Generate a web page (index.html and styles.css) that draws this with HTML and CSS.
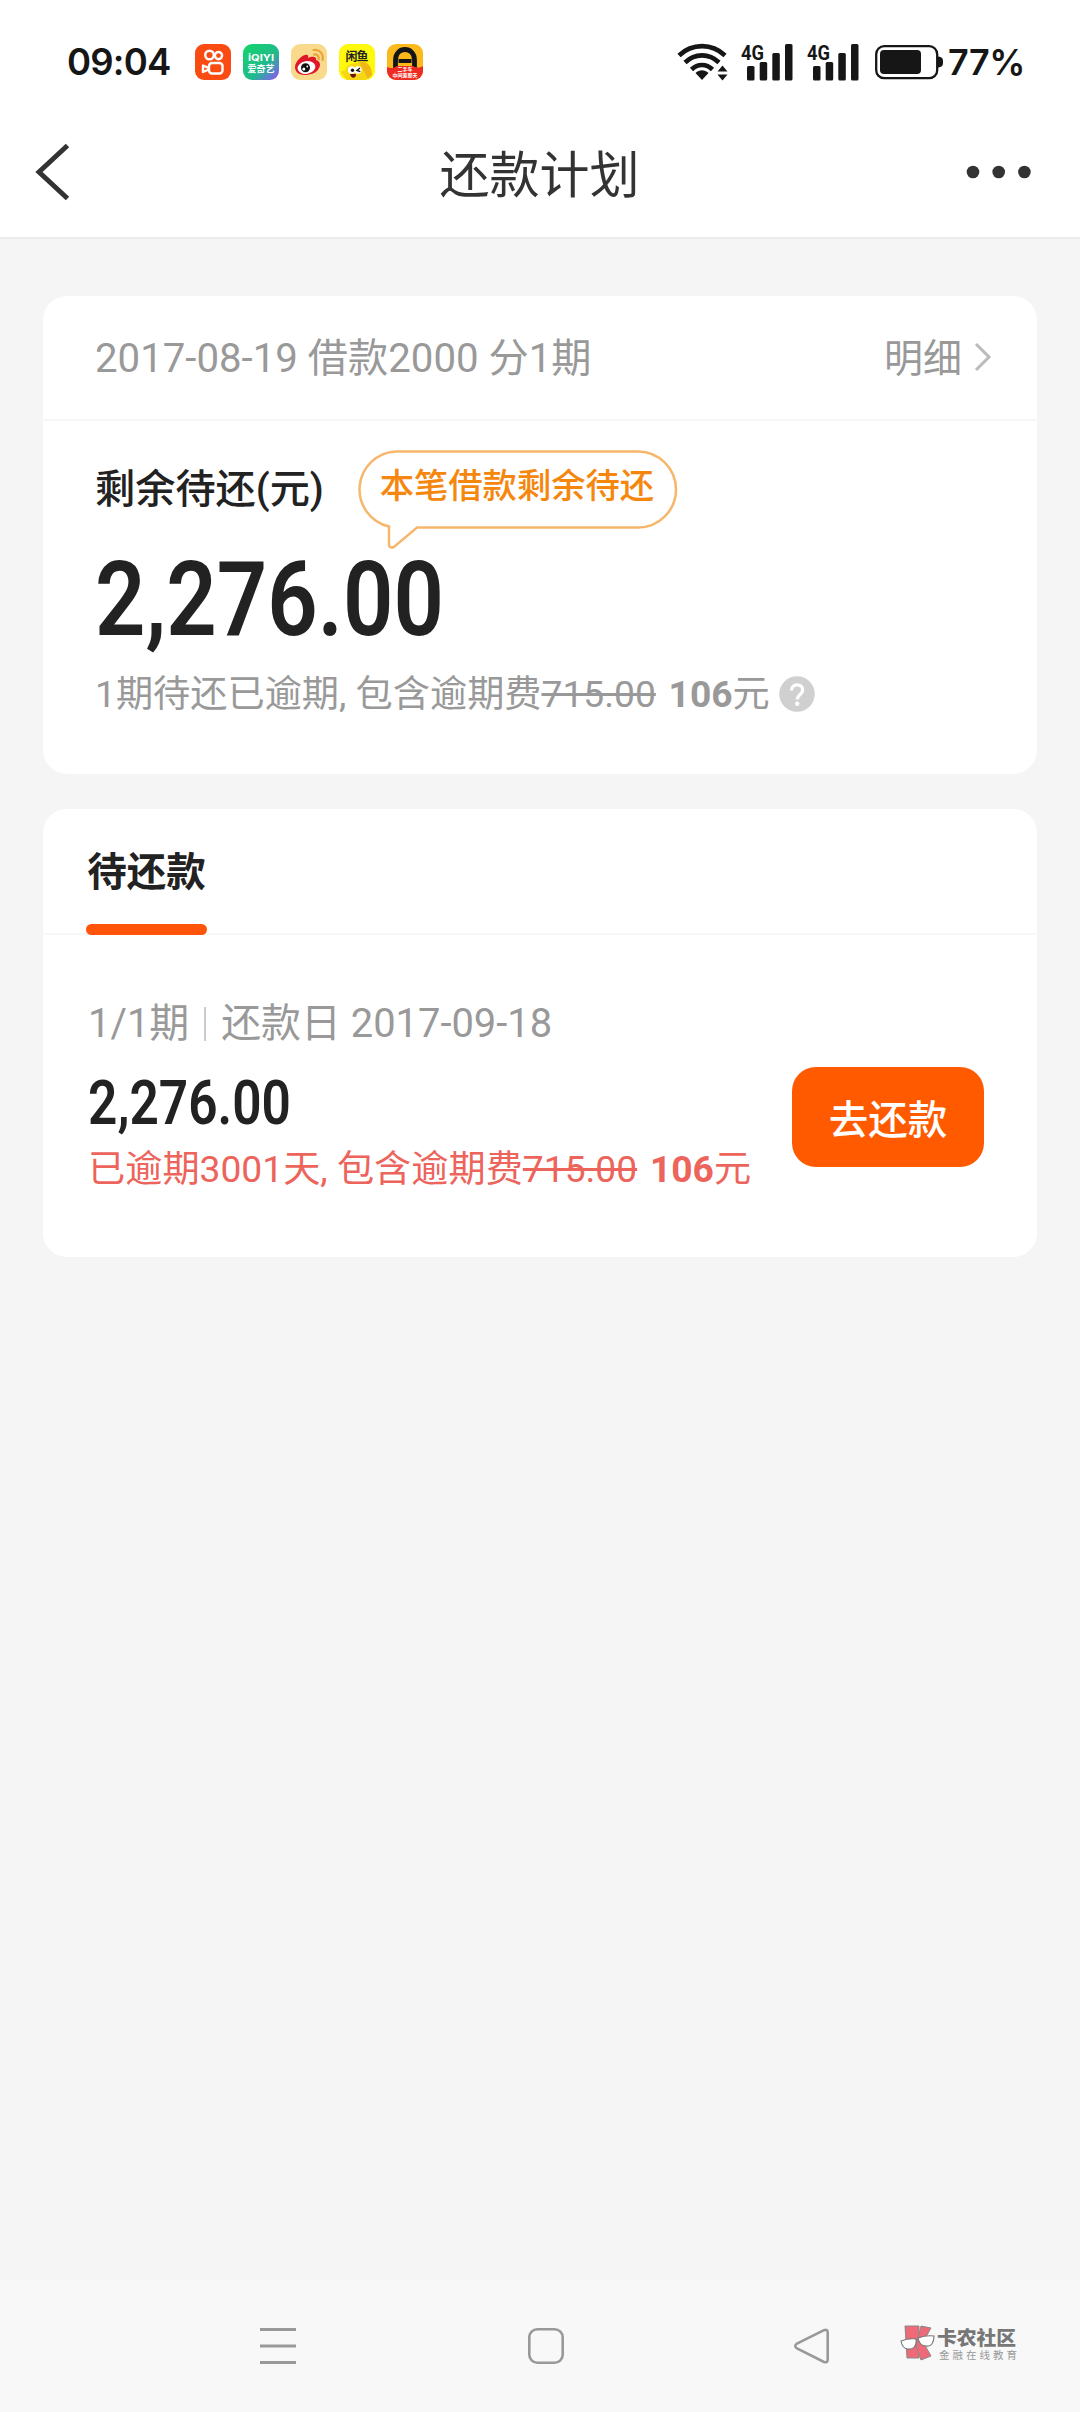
FILE: index.html
```html
<!DOCTYPE html>
<html lang="zh-CN">
<head>
<meta charset="utf-8">
<title>还款计划</title>
<link rel="stylesheet" href="styles.css">
</head>
<body>
<div class="status">
  <span class="time">09:04</span>
  <div class="apps">
    <svg class="app" viewBox="0 0 36 36"><rect width="36" height="36" rx="9" fill="#fa4b12"/><g fill="none" stroke="#fff" stroke-width="2.4"><circle cx="14.5" cy="11" r="4.3"/><circle cx="23.5" cy="11.6" r="3.6"/><rect x="14" y="19" width="13.5" height="10.5" rx="3"/><path d="M14 24.2 8 21.5v6.500l6-2.500" stroke-linejoin="round"/></g></svg>
    <svg class="app" viewBox="0 0 36 36"><defs><linearGradient id="qy" x1="0" y1="0" x2="1" y2="1"><stop offset="0" stop-color="#13d668"/><stop offset=".6" stop-color="#20ba8c"/><stop offset=".82" stop-color="#5e7fd0"/><stop offset="1" stop-color="#a044e8"/></linearGradient></defs><rect width="36" height="36" rx="9" fill="url(#qy)"/><text class="app-latin" x="18" y="16.500" textLength="26" lengthAdjust="spacingAndGlyphs">iQIYI</text><text class="app-cjk" x="18" y="28" textLength="27">爱奇艺</text></svg>
    <svg class="app" viewBox="0 0 36 36"><rect width="36" height="36" rx="9" fill="#f9d98c"/><path d="M4 23c0-5 6-11 10-12 3-1 4 1 3 3 4-2 9-2 8 2 4 1 5 5 3 8-2 5-9 7-14 7-6 0-10-3-10-8z" fill="#e0162b"/><ellipse cx="15.500" cy="23.500" rx="9" ry="6.300" fill="#fff" transform="rotate(-10 15.500 23.500)"/><circle cx="14.500" cy="23.800" r="4.500" fill="#111"/><circle cx="12.800" cy="25" r="1.500" fill="#fff"/><circle cx="16.300" cy="22.500" r=".9" fill="#fff"/><path d="M22.500 6c6-1 10.500 4 9 10M23 10.500c3-.5 5.300 1.800 4.600 4.700" fill="none" stroke="#e9a43a" stroke-width="2.200" stroke-linecap="round"/></svg>
    <svg class="app" viewBox="0 0 36 36"><rect width="36" height="36" rx="9" fill="#fdf80c"/><text class="app-fish" x="18" y="16.500" textLength="23">闲鱼</text><path d="M3 30c-2-3 1-4 3-3 1-6 7-8 13-8 2-3 5-2 7 0 5 2 7 6 6 11l-2 4-4 2H8z" fill="#f7d713"/><path d="M20 18c6-2 13 3 13 13l-4 4z" fill="#f0b716"/><circle cx="12.500" cy="26" r="3.700" fill="#fff"/><circle cx="19" cy="26" r="3.700" fill="#fff"/><circle cx="13.500" cy="26.300" r="1.700" fill="#111"/><path d="m21 24-3 2.400 3.300 1.200" fill="none" stroke="#111" stroke-width="1.400"/><path d="M11 30h6c0 5-5 5-6 0z" fill="#6d130b"/></svg>
    <svg class="app" viewBox="0 0 36 36"><defs><clipPath id="ac"><rect width="36" height="36" rx="9"/></clipPath></defs><g clip-path="url(#ac)"><path fill="#fcb91c" d="M0 0h36v36H0z"/><path d="M8.500 24v-8c0-14 19-14 19 0v8" fill="none" stroke="#151515" stroke-width="4.800"/><path d="M11.500 17h13" stroke="#151515" stroke-width="3.800"/><path d="M0 23c4 2 7 1 10-1h16c4 2 7 2 10 0v14H0z" fill="#ec2b22"/></g><text class="app-tag" x="18" y="27" textLength="15">二手车</text><text class="app-tag" x="18" y="33" textLength="25">中间差那天</text></svg>
  </div>
  <svg class="wifi" viewBox="0 0 52 38"><g fill="none" stroke="#161616" stroke-width="4.600"><path d="M2 12.500c13-12.500 33-12.500 46 0"/><path d="M8 19.500c10-9.500 24-9.500 34 0"/><path d="M14.500 26.500c6-6 15-6 21 0"/></g><path d="M25 37l-6.500-7c4-3.600 9-3.600 13 0zM40.500 28.500l5-6 5 6zM40.500 31.500h10l-5 6z" fill="#161616"/></svg>
  <svg class="signal" viewBox="0 0 54 38"><text class="net" x="0" y="16.500" textLength="23" lengthAdjust="spacingAndGlyphs">4G</text><g fill="#161616"><rect x="6" y="23" width="7.500" height="14.500" rx="1.500"/><rect x="18.700" y="19" width="7.500" height="18.500" rx="1.500"/><rect x="31.300" y="10" width="7.500" height="27.500" rx="1.500"/><rect x="44" y="1" width="7.500" height="36.500" rx="1.500"/></g></svg>
  <svg class="signal" viewBox="0 0 54 38"><text class="net" x="0" y="16.500" textLength="23" lengthAdjust="spacingAndGlyphs">4G</text><g fill="#161616"><rect x="6" y="23" width="7.500" height="14.500" rx="1.500"/><rect x="18.700" y="19" width="7.500" height="18.500" rx="1.500"/><rect x="31.300" y="10" width="7.500" height="27.500" rx="1.500"/><rect x="44" y="1" width="7.500" height="36.500" rx="1.500"/></g></svg>
  <svg class="battery" viewBox="0 0 68 36"><rect x="1.200" y="2.200" width="61" height="32" rx="8" fill="none" stroke="#161616" stroke-width="2.300"/><rect x="5" y="6" width="41" height="24" rx="4" fill="#161616"/><path d="M63 12.500c5 .5 5 3 5 5.500s0 5-5 5.500z" fill="#161616"/></svg>
  <span class="percent">77%</span>
</div>
<header class="titlebar">
  <svg class="back" viewBox="0 0 36 60"><path d="M32.500 3.500 4 30l28.500 26.500" fill="none" stroke="#333" stroke-width="5"/></svg>
  <h1 class="title">还款计划</h1>
  <svg class="more" viewBox="0 0 66 14"><g fill="#333"><circle cx="7" cy="7" r="6.300"/><circle cx="32.700" cy="7" r="6.300"/><circle cx="58.400" cy="7" r="6.300"/></g></svg>
</header>
<main class="content">
  <section class="card summary">
    <div class="loan">
      <span>2017-08-19 借款2000 分1期</span>
      <a class="detail">明细<svg class="arrow" viewBox="0 0 18 30"><path d="M2 2l13 13L2 28" fill="none" stroke="#bbb" stroke-width="3"/></svg></a>
    </div>
    <div class="remain">
      <div class="remain-head">
        <span class="remain-label">剩余待还(元)</span>
        <div class="bubble">
          <svg class="bubble-shape" viewBox="0 0 320 100"><path d="M39 1.500h242a38 38 0 0 1 0 76H60L37 97q-5 2-5-3V76.500A38 38 0 0 1 39 1.500z" fill="#fff" stroke="#f6b76c" stroke-width="2.500"/></svg>
          <span class="bubble-text">本笔借款剩余待还</span>
        </div>
      </div>
      <div class="total"><span class="num">2,276.00</span></div>
      <div class="note"><span class="fee">1期待还已逾期, 包含逾期费<s>715.00</s> <b>106</b>元</span><svg class="help" viewBox="0 0 36 36"><circle cx="18" cy="18" r="17.800" fill="#d0d0d0"/><path d="M12.500 14.500c0-7.500 11.200-7.500 11.200-.5 0 4.500-5.500 4.500-5.500 9.500" fill="none" stroke="#fff" stroke-width="3.200"/><circle cx="18.200" cy="27.700" r="2.200" fill="#fff"/></svg></div>
    </div>
  </section>
  <section class="card plan">
    <div class="tabs"><span class="tab">待还款</span></div>
    <div class="item">
      <div class="item-info">
        <div class="period"><span>1/1期</span><i class="bar"></i><span>还款日 2017-09-18</span></div>
        <div class="amount"><span class="num">2,276.00</span></div>
        <div class="overdue fee">已逾期3001天, 包含逾期费<s>715.00</s> <b>106</b>元</div>
      </div>
      <button class="pay">去还款</button>
    </div>
  </section>
</main>
<nav class="navbar">
  <svg class="nav-icon" viewBox="0 0 36 36"><path d="M0 1.500h36M0 18h36M0 34.500h36" stroke="#999" stroke-width="3"/></svg>
  <svg class="nav-icon" viewBox="0 0 36 36"><rect x="1.300" y="1.300" width="33.400" height="33.400" rx="8" fill="none" stroke="#999" stroke-width="2.600"/></svg>
  <svg class="nav-icon" viewBox="0 0 36 36"><path d="M30 2.200 3 15.500q-3.500 2.500 0 5L30 34q3.700 1 3.700-2.500v-27Q33.700 1 30 2.200z" fill="none" stroke="#999" stroke-width="2.600"/></svg>
  <div class="brand">
    <svg class="brand-logo" viewBox="0 0 36 38"><g fill="#ef6a78" stroke="#888" stroke-width="1"><path d="M5 2h14v32H7z"/><path d="M21 2l10 2-8 14 8 14-10 4-5-14z"/></g><g fill="#fff" stroke="#777" stroke-width="1.100"><path d="M1 17q8-3 15-2c1 7-3 11-8 10-4 0-6-3-7-8z"/><path d="M18 14q8-3 16-2c0 7-3 11-8 10-4 0-7-3-8-8z"/></g></svg>
    <div class="brand-words"><span class="brand-name">卡农社区</span><span class="brand-sub">金融在线教育</span></div>
  </div>
</nav>
</body>
</html>
```
FILE: styles.css
```css
* { box-sizing: border-box; }
body {
  margin: 0;
  width: 1080px;
  height: 2412px;
  display: flex;
  flex-direction: column;
  background: #f5f5f5;
  color: #222;
  font-family: Roboto, "Noto Sans CJK SC", sans-serif;
  overflow: hidden;
}
svg { display: block; flex: none; overflow: visible; }
span, h1, div { white-space: nowrap; }

.status {
  height: 124px;
  padding-left: 67px;
  display: flex;
  align-items: center;
  background: #fff;
  color: #161616;
  font-family: Inter, sans-serif;
}
.time { width: 128px; font-size: 36.5px; font-weight: 600; letter-spacing: -0.8px; }
.apps { display: flex; gap: 12px; width: 482px; }
.app { width: 36px; height: 36px; }
.app text { text-anchor: middle; fill: #fff; font-family: "Noto Sans CJK SC", sans-serif; font-weight: 700; }
.app .app-latin { font-family: Inter, sans-serif; font-size: 9.5px; }
.app .app-cjk { font-size: 9px; }
.app .app-fish { font-size: 12px; fill: #222; }
.app .app-tag { font-size: 5px; }
.wifi { width: 52px; height: 38px; margin-right: 12px; }
.signal { width: 54px; height: 38px; margin-right: 12px; }
.net { font: 700 21px Roboto, sans-serif; fill: #161616; }
.battery { width: 68px; height: 36px; margin-left: 2px; }
.percent { margin-left: 5px; font-size: 36px; font-weight: 600; letter-spacing: -0.5px; }

.titlebar {
  height: 115px;
  padding: 0 48px 18px 35px;
  display: flex;
  align-items: center;
  justify-content: space-between;
  background: #fff;
  border-bottom: 2px solid #ececec;
}
.back { width: 36px; height: 60px; margin-right: 42px; }
.title { margin: 0; padding-top: 8px; font-size: 50px; line-height: 60px; font-weight: 400; color: #333; }
.more { width: 66px; height: 14px; }

.content { flex: 1; padding: 57px 43px 0; display: flex; flex-direction: column; gap: 35px; }
.card { background: #fff; border-radius: 24px; }

.summary { height: 478px; }
.loan {
  height: 125px;
  padding: 0 45px 6px 52px;
  display: flex;
  align-items: center;
  justify-content: space-between;
  border-bottom: 2px solid #f6f6f6;
  font-size: 40.2px;
  color: #999;
}
.detail { display: flex; align-items: center; gap: 12px; font-size: 39px; }
.arrow { width: 18px; height: 30px; margin-top: 5px; }
.remain { padding: 29px 52px 0; }
.remain-head { display: flex; height: 78px; gap: 33px; }
.remain-label { font-size: 40.2px; line-height: 80px; font-weight: 500; }
.bubble { position: relative; width: 320px; height: 78px; text-align: center; }
.bubble-shape { position: absolute; left: 0; top: 0; width: 320px; height: 100px; }
.bubble-text { position: relative; font-size: 34.3px; line-height: 72px; font-weight: 500; color: #f5870f; }
.num { display: inline-block; transform: scaleX(.85); transform-origin: left; font-weight: 600; }
.total { height: 120px; font-size: 104px; line-height: 143px; }
.note { display: flex; align-items: flex-start; height: 92px; padding-top: 21px; font-size: 37.2px; line-height: 50px; color: #999; }
.fee b { margin-left: 3.5px; }
.help { width: 36px; height: 36px; margin: 7px 0 0 9px; }

.plan { height: 448px; }
.tabs { height: 126px; padding-left: 43px; border-bottom: 2px solid #f8f8f8; }
.tab {
  position: relative;
  display: block;
  width: 121px;
  height: 126px;
  text-align: center;
  font-size: 39.5px;
  line-height: 128px;
  font-weight: 700;
}
.tab::after {
  content: "";
  position: absolute;
  left: 0;
  bottom: 0;
  width: 121px;
  height: 11px;
  border-radius: 6px;
  background: #ff5409;
}
.item { display: flex; justify-content: space-between; padding: 60px 53px 0 45px; }
.period { display: flex; align-items: center; height: 56px; padding-bottom: 7px; font-size: 39.9px; color: #999; }
.bar { width: 2px; height: 34px; margin: 8px 15px 0; background: #ccc; }
.amount { height: 84px; font-size: 60.5px; line-height: 106px; }
.overdue { height: 70px; padding-top: 9px; line-height: 50px; font-size: 37.2px; color: #ec645c; }
.pay {
  width: 192px;
  height: 100px;
  margin-top: 72px;
  padding: 0;
  border: 0;
  border-radius: 24px;
  background: #ff5a00;
  color: #fff;
  font: 500 39.5px/100px "Noto Sans CJK SC", sans-serif;
}

.navbar { height: 132px; padding: 0 62px 0 260px; display: flex; align-items: center; background: #f8f8f8; }
.nav-icon { width: 36px; height: 36px; margin-right: 232px; }
.nav-icon:nth-child(2) { margin-right: 230px; }
.nav-icon:nth-child(3) { margin-right: 70px; }
.brand { display: flex; align-items: center; gap: 1px; padding-bottom: 7px; font-family: "Noto Sans CJK SC", sans-serif; }
.brand-logo { width: 36px; height: 38px; }
.brand-words { display: flex; flex-direction: column; }
.brand-name { font-size: 19.8px; line-height: 23px; font-weight: 900; color: #777; }
.brand-sub { font-size: 10.5px; line-height: 13px; letter-spacing: 3px; color: #999; padding-left: 2px; }
```
